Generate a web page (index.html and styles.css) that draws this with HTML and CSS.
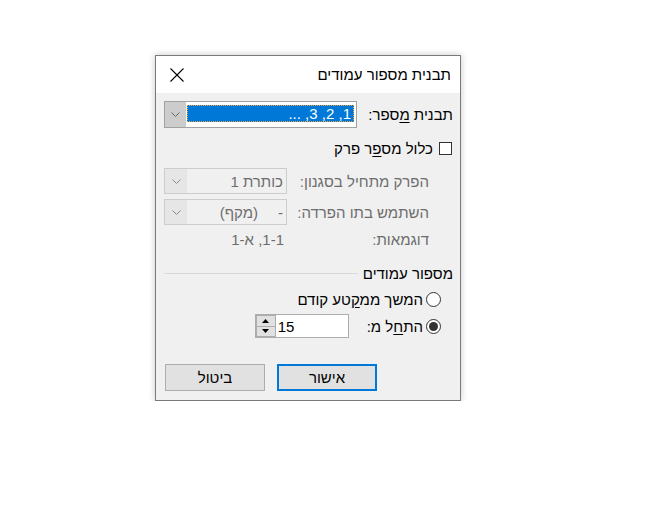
FILE: index.html
```html
<!DOCTYPE html>
<html lang="he" dir="rtl">
<head>
<meta charset="utf-8">
<link rel="stylesheet" href="styles.css">
</head>
<body>
<div class="dialog">
  <div class="titlebar">
    <div class="title">תבנית מספור עמודים</div>
    <div class="close">
      <svg width="14" height="14" viewBox="0 0 14 14"><path d="M0.5 0.5L13.5 13.5M13.5 0.5L0.5 13.5" stroke="#000" stroke-width="1.1" fill="none"/></svg>
    </div>
  </div>
  <div class="content">
    <div class="row r-format">
      <span class="label">תבנית <u>מ</u>ספר:</span>
      <div class="combo combo-wide">
        <div class="combo-text"><span class="sel">1, 2, 3, ...</span></div>
        <div class="combo-btn">
          <svg width="9" height="5" viewBox="0 0 9 5"><path d="M0.5 0.5L4.5 4.5L8.5 0.5" stroke="#666" fill="none"/></svg>
        </div>
      </div>
    </div>

    <div class="row r-check">
      <span class="checkbox"></span>
      <span class="check-label">כלול מס<u>פ</u>ר פרק</span>
    </div>

    <div class="row r-dis">
      <span class="label dim indent">הפרק מתחיל בסגנון:</span>
      <div class="combo combo-dis">
        <div class="combo-text dis-text" dir="ltr">כותרת 1</div>
        <div class="combo-btn dis-btn">
          <svg width="9" height="5" viewBox="0 0 9 5"><path d="M0.5 0.5L4.5 4.5L8.5 0.5" stroke="#8a8a8a" fill="none"/></svg>
        </div>
      </div>
    </div>

    <div class="row r-dis r-dis2">
      <span class="label dim indent">השתמש בתו הפרדה:</span>
      <div class="combo combo-dis">
        <div class="combo-text dis-text sep-text" dir="ltr"><span>(מקף)</span><span>-</span></div>
        <div class="combo-btn dis-btn">
          <svg width="9" height="5" viewBox="0 0 9 5"><path d="M0.5 0.5L4.5 4.5L8.5 0.5" stroke="#8a8a8a" fill="none"/></svg>
        </div>
      </div>
    </div>

    <div class="row r-examples">
      <span class="label dim indent">דוגמאות:</span>
      <div class="example-value dim">1-1, א-1</div>
    </div>

    <div class="section">
      <span class="section-title">מספור עמודים</span>
      <span class="section-line"></span>
    </div>

    <div class="row r-radio1">
      <span class="radio"></span>
      <span class="radio-label">המשך ממ<u>ק</u>טע קודם</span>
    </div>

    <div class="row r-radio2">
      <span class="radio checked"><span class="dot"></span></span>
      <span class="radio-label">הת<u>ח</u>ל מ:</span>
      <div class="spin" dir="ltr">
        <div class="spin-btns">
          <div class="spin-btn"><svg width="7" height="4" viewBox="0 0 7 4"><path d="M0 4L3.5 0L7 4Z" fill="#000"/></svg></div>
          <div class="spin-btn"><svg width="7" height="4" viewBox="0 0 7 4"><path d="M0 0L3.5 4L7 0Z" fill="#000"/></svg></div>
        </div>
        <div class="spin-value">15</div>
      </div>
    </div>

    <div class="buttons">
      <div class="btn btn-ok">אישור</div>
      <div class="btn">ביטול</div>
    </div>
  </div>
</div>
</body>
</html>
```

FILE: styles.css
```css
* { box-sizing: border-box; }

html, body {
  margin: 0;
  background: #ffffff;
}

body {
  font-family: "Liberation Sans", "DejaVu Sans", sans-serif;
  font-size: 15px;
  color: #000;
}

.dialog {
  margin: 55px auto 0 155px;
  width: 306px;
  border: 1px solid #7a7a7a;
  background: #f0f0f0;
  box-shadow: 0 0 7px rgba(0, 0, 0, 0.22);
}

.titlebar {
  height: 37px;
  background: #ffffff;
  display: flex;
  align-items: center;
  justify-content: space-between;
  padding: 0 9px 0 14px;
}

.title {
  font-size: 15px;
}

.close svg { display: block; }

.content {
  display: flex;
  flex-direction: column;
  padding: 8px 7px 9px 8px;
}

.row {
  display: flex;
  align-items: center;
}

u { text-decoration: underline; text-underline-offset: 2px; }

.r-format {
  height: 27px;
  justify-content: space-between;
}

.combo {
  display: flex;
  height: 100%;
  border: 1px solid #a2a2a2;
  background: #ffffff;
}

.combo-wide { width: 193px; }

.combo-text {
  flex: 1;
  padding: 3px 2px 5px 1px;
}

.sel {
  display: block;
  height: 100%;
  background: #0078d7;
  color: #ffffff;
  border: 1px dotted #f0a040;
  padding: 0 2px 0 0;
  line-height: 15px;
  text-align: right;
}

.combo-btn {
  width: 21px;
  background: #cccccc;
  display: flex;
  align-items: center;
  justify-content: center;
}

.combo-btn svg { display: block; }

.r-check {
  height: 26px;
  margin-top: 7px;
  gap: 6px;
  padding-right: 1px;
}

.checkbox {
  width: 13px;
  height: 13px;
  border: 1px solid #333333;
  background: #ffffff;
}

.r-dis {
  height: 26px;
  margin-top: 7px;
  justify-content: space-between;
}

.r-dis2 { margin-top: 5px; }

.dim { color: #6d6d6d; }

.indent { margin-right: 24px; }

.combo-dis {
  width: 123px;
  border-color: #cccccc;
  background: #f0f0f0;
}

.dis-text {
  padding: 0 3px 0 0;
  display: flex;
  align-items: center;
  justify-content: flex-end;
  color: #6d6d6d;
}

.sep-text { gap: 20px; }

.dis-btn {
  background: #e6e6e6;
  width: 22px;
}

.r-examples {
  height: 18px;
  margin-top: 5px;
  justify-content: space-between;
}

.example-value {
  width: 123px;
  text-align: right;
  padding-right: 3px;
}

.section {
  display: flex;
  align-items: center;
  height: 16px;
  margin-top: 17px;
  gap: 5px;
}

.section-line {
  flex: 1;
  height: 1px;
  background: #d9d9d9;
}

.r-radio1 {
  height: 18px;
  margin-top: 9px;
  padding-right: 12px;
  gap: 3px;
}

.r-radio2 {
  height: 24px;
  margin-top: 6px;
  padding-right: 12px;
  gap: 3px;
}

.radio {
  width: 15px;
  height: 15px;
  border: 1px solid #333333;
  border-radius: 50%;
  background: #ffffff;
  display: flex;
  align-items: center;
  justify-content: center;
}

.dot {
  width: 9px;
  height: 9px;
  border-radius: 50%;
  background: #333333;
}

.spin {
  margin-right: 15px;
  width: 94px;
  height: 24px;
  border: 1px solid #adadad;
  background: #ffffff;
  display: flex;
}

.spin-btns {
  width: 20px;
  display: flex;
  flex-direction: column;
}

.spin-btn {
  flex: 1;
  background: #e1e1e1;
  border: 1px solid #adadad;
  display: flex;
  align-items: center;
  justify-content: center;
}

.spin-btn + .spin-btn { border-top: none; }

.spin-btn svg { display: block; }

.spin-value {
  padding-left: 2px;
  display: flex;
  align-items: center;
}

.buttons {
  display: flex;
  justify-content: flex-end;
  gap: 12px;
  margin-top: 26px;
  padding-left: 1px;
}

.btn {
  width: 100px;
  height: 27px;
  background: #e1e1e1;
  border: 1px solid #adadad;
  display: flex;
  align-items: center;
  justify-content: center;
}

.btn-ok {
  border: 2px solid #0078d7;
}
```
